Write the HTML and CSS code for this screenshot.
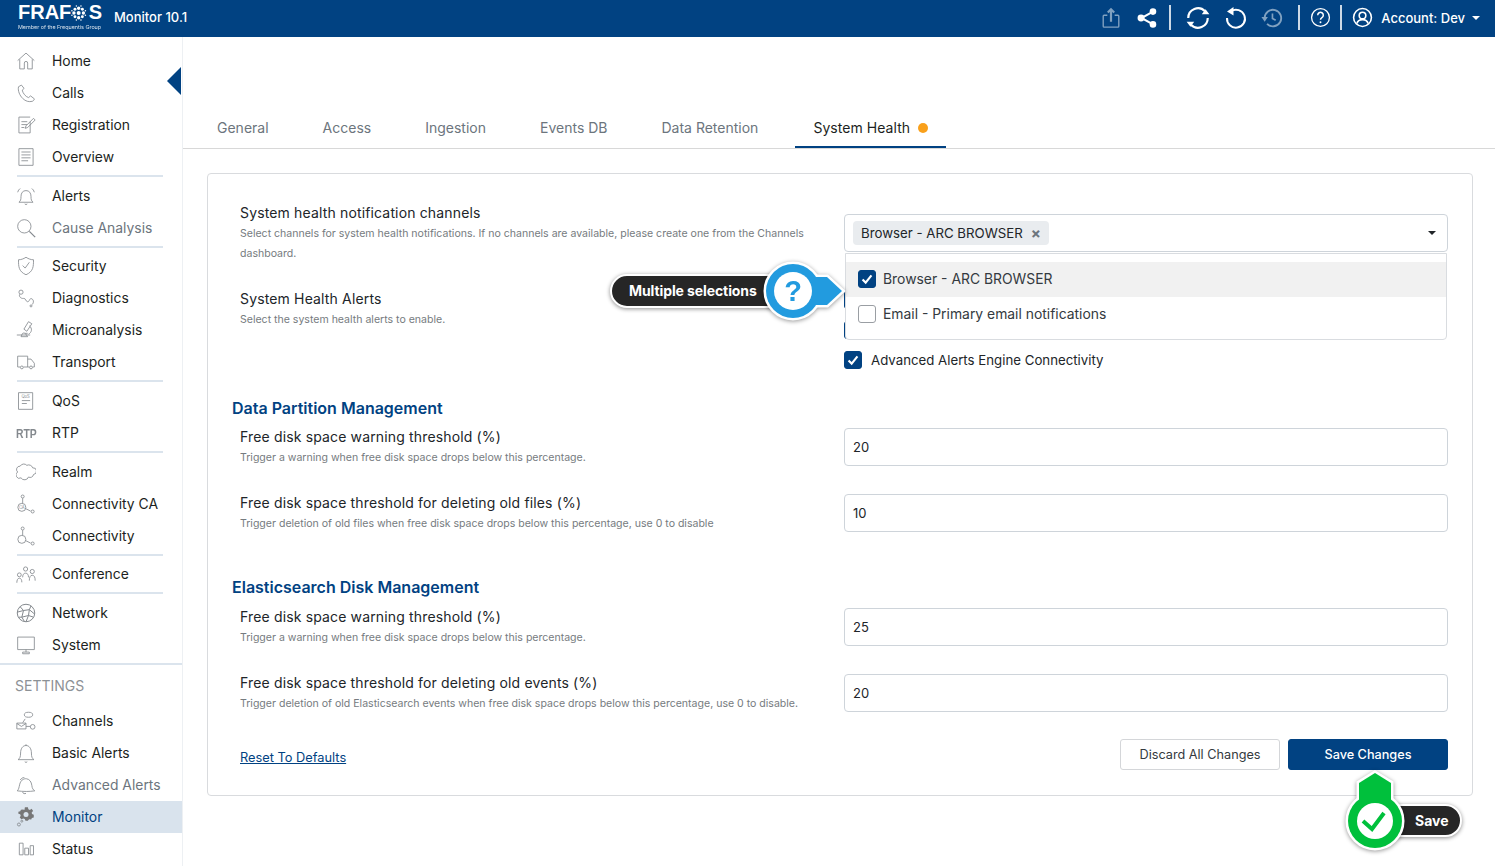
FILE: index.html
```html
<!DOCTYPE html>
<html lang="en">
<head>
    <meta charset="UTF-8">
    <title>Monitor 10.1</title>
    <link rel="stylesheet" href="styles.css">
</head>
<body>
    <header class="topbar">
        <div class="logo">
            <div class="logo-word">FRAF<svg class="logo-o" viewBox="0 0 20 20"><g fill="#fff"><circle cx="10" cy="10" r="2.600"/><circle cx="10" cy="3.800" r="2.200"/><circle cx="10" cy="16.200" r="2.200"/><circle cx="3.800" cy="10" r="2.200"/><circle cx="16.200" cy="10" r="2.200"/><circle cx="5.200" cy="5.200" r="1.900"/><circle cx="14.800" cy="5.200" r="1.900"/><circle cx="5.200" cy="14.800" r="1.900"/><circle cx="14.800" cy="14.800" r="1.900"/><circle cx="1.200" cy="7" r="1"/><circle cx="18.800" cy="7" r="1"/><circle cx="1.200" cy="13" r="1"/><circle cx="18.800" cy="13" r="1"/><circle cx="7" cy="1" r="1"/><circle cx="13" cy="1" r="1"/><circle cx="7" cy="19" r="1"/><circle cx="13" cy="19" r="1"/></g></svg>S</div>
            <div class="logo-sub">Member of the Frequentis Group</div>
        </div>
        <div class="app-name">Monitor 10.1</div>
        <div class="top-actions">
            <svg class="top-icon dim" viewBox="0 0 24 24"><path d="M8 9H4.500a1 1 0 0 0-1 1v11a1 1 0 0 0 1 1h15a1 1 0 0 0 1-1V10a1 1 0 0 0-1-1H16"/><path d="M12 16V2.500M8.500 6 12 2.500 15.500 6" stroke-width="2.400"/></svg>
            <svg class="top-icon ic-share" viewBox="0 0 24 24"><path d="M18.500 5 6 12l12.500 7" stroke-width="2.200"/><circle class="solid" cx="18.500" cy="5" r="3.600"/><circle class="solid" cx="5.500" cy="12" r="3.800"/><circle class="solid" cx="18.500" cy="19" r="3.600"/></svg>
            <span class="top-sep"></span>
            <svg class="top-icon ic-sync" viewBox="0 0 24 24"><path d="M3 12a9 9 0 0 1 15.500-6.200M21 12a9 9 0 0 1-15.500 6.200" stroke-width="2"/><path class="solid" d="M15.500 8.500h7l-3.500-4.500zM8.500 15.500h-7l3.500 4.500z"/></svg>
            <svg class="top-icon ic-undo" viewBox="0 0 24 24"><path d="M7 5.200A9 9 0 1 1 3 12" stroke-width="2"/><path class="solid" d="M9.500 1v8.500L3 5.500z"/></svg>
            <svg class="top-icon ic-history dim" viewBox="0 0 24 24"><path d="M4 12a9 9 0 1 1 2.600 6.400" stroke-width="2"/><path class="solid" d="M.5 11h7L4 16z"/><path d="M12.500 7v5.500l3.500 2" stroke-width="1.800"/></svg>
            <span class="top-sep"></span>
            <svg class="top-icon ic-help" viewBox="0 0 24 24"><circle cx="12" cy="12" r="10.200" stroke-width="1.500"/><path d="M8.800 9.300a3.200 3.200 0 1 1 4.800 2.800c-1 .6-1.600 1.200-1.600 2.400" stroke-width="1.700"/><circle class="solid" cx="12" cy="17.500" r="1.100"/></svg>
            <span class="top-sep last"></span>
            <svg class="top-icon ic-account" viewBox="0 0 24 24"><circle cx="12" cy="12" r="10.200" stroke-width="1.800"/><circle cx="12" cy="9.800" r="3.800" stroke-width="1.800"/><path d="M5.500 19c1-3.500 3.500-4.600 6.500-4.600s5.500 1.100 6.500 4.600" stroke-width="1.800"/></svg>
            <span class="account-name">Account: Dev</span>
            <span class="caret"></span>
        </div>
    </header>

    <div class="layout">
        <nav class="sidebar">
            <span class="collapse"></span>
            <div class="nav-item"><svg viewBox="0 0 24 24"><path d="M2 11.500 12 2.500l10 9M4.500 10v11.500h5.500V14.500a2 2 0 0 1 4 0v7h5.500V10"/></svg>Home</div>
            <div class="nav-item"><svg viewBox="0 0 24 24"><path d="M6.500 2.500 3 4.500c-1 5 1.500 10.500 5 14s7.500 4.500 11.500 3.500c1.500-.5 2.500-2 2.500-3l-4.500-3.500-2.500 2c-3.500-1-7-5.500-7.500-9l2.200-2z"/></svg>Calls</div>
            <div class="nav-item"><svg viewBox="0 0 24 24"><path d="M17 8v13.500H3.500v-19H17M6.500 8h7M6.500 11.500h7M6.500 15h3.500M11 16l1 -3 9-9 2 2-9 9z"/></svg>Registration</div>
            <div class="nav-item"><svg viewBox="0 0 24 24"><path d="M3.500 2h17v20h-17zM6.500 6h11M6.500 9.500h11M6.500 13h11M6.500 16.500h8"/></svg>Overview</div>
            <div class="nav-sep"></div>
            <div class="nav-item"><svg viewBox="0 0 24 24"><path d="M3.500 19.500c2-1.500 2.500-3 2.500-7s2-7 6-7 6 3 6 7 .5 5.500 2.500 7zM10.500 21.500a2 2 0 0 0 3 0M2 7.500c.5-2 1.500-3.500 3-4.500M22 7.500c-.5-2-1.500-3.500-3-4.500"/></svg>Alerts</div>
            <div class="nav-item muted"><svg viewBox="0 0 24 24"><circle cx="10" cy="10" r="8"/><path d="m16 16 7 7" stroke-width="1.500"/></svg>Cause Analysis</div>
            <div class="nav-sep"></div>
            <div class="nav-item"><svg viewBox="0 0 24 24"><path d="M12 1.500c3 2 6 3 9 3 0 8 0 14-9 18-9-4-9-10-9-18 3 0 6-1 9-3zM8 11.500l3 3 5-7"/></svg>Security</div>
            <div class="nav-item"><svg viewBox="0 0 24 24"><circle cx="6" cy="5" r="2.500"/><path d="M4.500 7.500C3 10 6 13 9 12.500c3-.5 2.500 4 5 4s2-5 5-3.500 2 6 0 7"/><circle cx="18" cy="21.500" r="1.200"/></svg>Diagnostics</div>
            <div class="nav-item"><svg viewBox="0 0 24 24"><path d="M1 18h16M15 2l4 2.500-6 9-3.500-2.500zM16 7c4 3 3 8-1 10M11 16h3M7 18c0-2 2-3 4-2l3 4H6z"/></svg>Microanalysis</div>
            <div class="nav-item"><svg viewBox="0 0 24 24"><path d="M5 18H2V5h12v13H9M14 8.500h4l4 5v4.500h-2M14 18h2"/><circle cx="7" cy="18.500" r="1.700"/><circle cx="18" cy="18.500" r="1.700"/></svg>Transport</div>
            <div class="nav-sep"></div>
            <div class="nav-item"><svg viewBox="0 0 24 24"><path d="M3 2h17v20H3zM7 11.500h10M7 15h6"/><text class="tiny" x="11.500" y="8.500" text-anchor="middle">QoS</text></svg>QoS</div>
            <div class="nav-item"><span class="rtp-icon">RTP</span>RTP</div>
            <div class="nav-sep"></div>
            <div class="nav-item"><svg viewBox="0 0 24 24"><path d="M6 19a4 4 0 0 1-4-7 4 4 0 0 1 3-7 5 5 0 0 1 8-1 5 5 0 0 1 7 3 4 4 0 0 1 1 8 4 4 0 0 1-6 3 5 5 0 0 1-9 1z"/></svg>Realm</div>
            <div class="nav-item"><svg viewBox="0 0 24 24"><circle cx="8" cy="3" r="1.800"/><path d="M8 5v6M11.500 17.500l6 3"/><circle cx="7" cy="16" r="4.800"/><circle cx="20" cy="21" r="1.800"/><text class="tiny" x="7" y="18" text-anchor="middle">CA</text></svg>Connectivity CA</div>
            <div class="nav-item"><svg viewBox="0 0 24 24"><circle cx="8" cy="3" r="1.800"/><path d="M8 5v6M11.500 17.500l6 3"/><circle cx="7" cy="16" r="4.800"/><circle cx="20" cy="21" r="1.800"/></svg>Connectivity</div>
            <div class="nav-sep"></div>
            <div class="nav-item"><svg viewBox="0 0 24 24"><circle cx="11.500" cy="6" r="2.500"/><path d="M8 16c0-3 1-5 3.500-5s3.500 2 3.500 5"/><circle cx="4" cy="13" r="2.300"/><path d="M1 22.500c0-3 1-5.500 3-5.500s3 2 3 5"/><circle cx="19.500" cy="9" r="2.500"/><path d="M16 20c0-4 1-6.500 3.500-6.500S23 16 23 20"/></svg>Conference</div>
            <div class="nav-sep"></div>
            <div class="nav-item"><svg viewBox="0 0 24 24"><circle cx="12" cy="12" r="10.500" stroke-width="1.200"/><path d="M5 4.500 9 9l-7.500 2M9 9l7-1 2-4.500M16 8l6 5M16 8l-1 7 6 2M9 9l-2 8-4 0M7 17l8-2-3 7.500M7 17l3 5" stroke-width="1.200"/></svg>Network</div>
            <div class="nav-item"><svg viewBox="0 0 24 24"><path d="M2 2.500h20v15H2zM12 17.500v3M8 20.500h8v2H8z"/></svg>System</div>
            <div class="nav-sep wide"></div>
            <div class="nav-title">SETTINGS</div>
            <div class="nav-item"><svg viewBox="0 0 24 24"><path d="M1 14.500h11v7H1zM1 15l5.500 3.500L12 15M8 14l3-4.500"/><ellipse cx="15" cy="4.500" rx="5" ry="3"/><path d="M12 18.500h5"/><circle cx="20" cy="19" r="2.800"/></svg>Channels</div>
            <div class="nav-item"><svg viewBox="0 0 24 24"><path d="M2.500 20c2-1.500 3-3 3-8s2.500-9 6.500-9 6.500 4 6.500 9 1 6.500 3 8zM10.500 22.500a2 2 0 0 0 3 0M12 3V1.500"/></svg>Basic Alerts</div>
            <div class="nav-item muted"><svg viewBox="0 0 24 24"><path d="M1.500 19c2-2 2-4 3-8s4-7 8-6.500 6 4 6.500 8 1.500 5 3.500 6.500c-6 1-14 1-21 0zM8 20.500a2.500 2 0 0 0 4 1.500M5 6c1.500-2 3-3 5-3"/></svg>Advanced Alerts</div>
            <div class="nav-item active"><svg viewBox="0 0 24 24"><path class="gear" d="M13 1.500h4l.6 2.600 2 .9 2.300-1.400 2.100 2.800-1.900 1.800.3 2.300 2.400 1v3.500l-2.500.7-.9 2-.5.200-2.300-.5-1.800 2-3 .2-1-2.400-2-.8-2.400 1.200-2.300-2.500 1.300-2.200-.7-2.100-2.400-.8V7.600l2.500-.7.900-2 2.800-.4 1.800.5z" transform="translate(-1 -1) scale(.9)"/><circle class="gear-hole" cx="12" cy="9" r="3"/><circle cx="3.500" cy="21" r="1.800"/><circle cx="7" cy="17" r="1.200"/></svg>Monitor</div>
            <div class="nav-item"><svg viewBox="0 0 24 24"><path d="M4 5h4.500v14H4zM10.500 11H15v8h-4.500zM17 8h4v11h-4z"/></svg>Status</div>
        </nav>

        <main class="content">
            <div class="tabs">
                <div class="tab">General</div>
                <div class="tab">Access</div>
                <div class="tab">Ingestion</div>
                <div class="tab">Events DB</div>
                <div class="tab">Data Retention</div>
                <div class="tab current">System Health <span class="dot"></span></div>
            </div>

            <section class="card">
                <div class="form-row first">
                    <div>
                        <div class="label">System health notification channels</div>
                        <div class="help">Select channels for system health notifications. If no channels are available, please create one from the Channels dashboard.</div>
                    </div>
                    <div class="select">
                        <span class="chip">Browser - ARC BROWSER <span class="chip-x">×</span></span>
                        <span class="select-caret"></span>
                    </div>
                </div>
                <div class="form-row alerts">
                    <div>
                        <div class="label">System Health Alerts</div>
                        <div class="help">Select the system health alerts to enable.</div>
                    </div>
                    <div class="check-list">
                        <div class="check-row"><span class="box on"></span></div>
                        <div class="check-row"><span class="box on"></span></div>
                        <div class="check-row"><span class="box on"><svg viewBox="0 0 18 18"><path d="m4 9.500 3.500 3.500 6.500-8"/></svg></span>Advanced Alerts Engine Connectivity</div>
                    </div>
                </div>

                <h3 class="section-title">Data Partition Management</h3>
                <div class="form-row">
                    <div>
                        <div class="label">Free disk space warning threshold (%)</div>
                        <div class="help">Trigger a warning when free disk space drops below this percentage.</div>
                    </div>
                    <div class="input">20</div>
                </div>
                <div class="form-row spaced">
                    <div>
                        <div class="label">Free disk space threshold for deleting old files (%)</div>
                        <div class="help">Trigger deletion of old files when free disk space drops below this percentage, use 0 to disable</div>
                    </div>
                    <div class="input">10</div>
                </div>

                <h3 class="section-title second">Elasticsearch Disk Management</h3>
                <div class="form-row">
                    <div>
                        <div class="label">Free disk space warning threshold (%)</div>
                        <div class="help">Trigger a warning when free disk space drops below this percentage.</div>
                    </div>
                    <div class="input">25</div>
                </div>
                <div class="form-row spaced">
                    <div>
                        <div class="label">Free disk space threshold for deleting old events (%)</div>
                        <div class="help">Trigger deletion of old Elasticsearch events when free disk space drops below this percentage, use 0 to disable.</div>
                    </div>
                    <div class="input">20</div>
                </div>

                <div class="card-footer">
                    <a class="reset" href="#">Reset To Defaults</a>
                    <div class="buttons">
                        <button class="btn">Discard All Changes</button>
                        <button class="btn primary">Save Changes</button>
                    </div>
                </div>
            </section>
        </main>
    </div>

    <!-- dropdown open over the alerts list -->
    <div class="dropdown">
        <div class="option hover"><span class="box on"><svg viewBox="0 0 18 18"><path d="m4 9.500 3.500 3.500 6.500-8"/></svg></span>Browser - ARC BROWSER</div>
        <div class="option"><span class="box"></span>Email - Primary email notifications</div>
    </div>

    <!-- annotations on top of the screenshot -->
    <div class="callout multi">
        <span class="pill">Multiple selections</span>
        <svg class="badge" viewBox="0 0 84 62">
            <g class="halo"><circle cx="31" cy="31" r="27"/><path d="M45 17h20l15 14-15 14H45z"/></g>
            <g class="blue"><circle cx="31" cy="31" r="27"/><path d="M45 17h20l15 14-15 14H45z"/></g>
            <circle cx="31" cy="31" r="19" fill="#fff"/>
            <text x="31" y="41" text-anchor="middle" class="qmark">?</text>
        </svg>
    </div>
    <div class="callout save">
        <span class="pill">Save</span>
        <svg class="badge" viewBox="0 0 60 82">
            <g class="halo"><circle cx="30" cy="51" r="27"/><path d="M30 3 46 13v28H14V13z"/></g>
            <g class="green"><circle cx="30" cy="51" r="27"/><path d="M30 3 46 13v28H14V13z"/></g>
            <circle cx="30" cy="51" r="18" fill="#fff"/>
            <path class="tick" d="m18 51 9 8 12-16"/>
        </svg>
    </div>
</body>
</html>
```

FILE: styles.css
```css
* {
    box-sizing: border-box;
}

html, body {
    margin: 0;
    height: 866px;
    overflow: hidden;
}

body {
    position: relative;
    font-family: Inter, "Liberation Sans", sans-serif;
    font-size: 14px;
    color: #212529;
    background: #fff;
}

/* top bar */
.topbar {
    display: flex;
    align-items: center;
    height: 37px;
    padding-left: 18px;
    background: #014282;
    color: #fff;
}

.logo {
    width: 84px;
    margin: 0 12px 3px 0;
}

.logo-word {
    display: flex;
    align-items: center;
    height: 19px;
    font-family: "Liberation Sans", sans-serif;
    font-size: 20px;
    font-weight: 700;
    line-height: 19px;
}

.logo-o {
    width: 16px;
    height: 16px;
    margin: 0 2px 0 0;
}

.logo-sub {
    margin-top: 2px;
    font-size: 5.400px;
    line-height: 7px;
    white-space: nowrap;
    opacity: .85;
}

.app-name {
    padding-bottom: 3px;
    font-size: 13px;
    font-weight: 500;
}

.top-actions {
    display: flex;
    align-items: center;
    margin-left: auto;
    padding: 0 15px 2px 0;
}

.top-icon {
    width: 22px;
    height: 22px;
    fill: none;
    stroke: #fff;
    stroke-width: 1.500;
}

.top-icon .solid {
    fill: #fff;
    stroke: none;
}

.top-icon.dim {
    opacity: .5;
}

.ic-share {
    margin-left: 14px;
}

.ic-undo {
    margin-left: 13px;
    width: 24px;
    height: 24px;
}

.ic-history {
    margin: 0 4px 0 13px;
}

.ic-help, .ic-account {
    width: 21px;
    height: 21px;
}

.top-sep {
    width: 2px;
    height: 25px;
    margin-left: 11px;
    background: rgba(255, 255, 255, .8);
}

.top-sep.last {
    margin-left: 9px;
}

.top-sep + .top-icon {
    margin-left: 10px;
}

.top-sep + .ic-sync {
    width: 26px;
    height: 26px;
    margin-left: 14px;
}

.account-name {
    margin-left: 8px;
    font-size: 13px;
    font-weight: 500;
}

.caret {
    width: 0;
    height: 0;
    margin-left: 7px;
    border: 4px solid transparent;
    border-top-color: #fff;
    border-bottom: 0;
}

/* sidebar */
.layout {
    display: flex;
    height: 829px;
}

.sidebar {
    position: relative;
    flex: 0 0 183px;
    padding-top: 8px;
    border-right: 1px solid #edf0f3;
    overflow: hidden;
}

.collapse {
    position: absolute;
    top: 30px;
    right: 1px;
    border-style: solid;
    border-width: 14px 14px 14px 0;
    border-color: transparent #014282 transparent transparent;
}

.nav-item {
    display: flex;
    align-items: center;
    height: 32px;
    padding-left: 16px;
    font-size: 13.900px;
    color: #1c1f22;
}

.nav-item svg {
    flex: 0 0 20px;
    width: 20px;
    height: 20px;
    margin-right: 16px;
    fill: none;
    stroke: #84898e;
    stroke-width: 1;
}

.nav-item .tiny {
    font-size: 5px;
    fill: #84898e;
    stroke: none;
}

.nav-item.muted {
    color: #6c757d;
}

.nav-item.active {
    background: #d9e3ed;
    color: #014282;
}

.nav-item .gear {
    fill: #777;
    stroke: none;
}

.nav-item .gear-hole {
    fill: #d9e3ed;
    stroke: none;
}

.rtp-icon {
    width: 20px;
    margin-right: 16px;
    font-family: "Liberation Sans", sans-serif;
    font-size: 13px;
    font-weight: 700;
    color: #84898e;
    transform: scaleX(.8);
    transform-origin: left;
}

.nav-sep {
    height: 2px;
    margin: 2px 19px 2.700px 17px;
    background: #dbe4ed;
}

.nav-sep.wide {
    margin: 2px 0 0;
}

.nav-title {
    height: 40px;
    padding-left: 15px;
    font-size: 14px;
    line-height: 41px;
    color: #8d9196;
}

/* main column */
.content {
    flex: 1;
    min-width: 0;
}

.tabs {
    display: flex;
    gap: 18px;
    height: 112px;
    padding: 71px 0 0 16px;
    border-bottom: 1px solid #d8d8d8;
}

.tab {
    height: 40px;
    padding: 0 18px;
    font-size: 14px;
    line-height: 40px;
    color: #6c757d;
}

.tab.current {
    margin-left: 1px;
    border-bottom: 2px solid #014282;
    color: #1c1f22;
    letter-spacing: .05px;
}

.dot {
    display: inline-block;
    width: 10px;
    height: 10px;
    margin-left: 4px;
    border-radius: 50%;
    background: #f9a01b;
}

.card {
    position: relative;
    height: 623px;
    margin: 24px 22px 0 24px;
    padding: 29px 24px 0 32px;
    border: 1px solid #d9dbde;
    border-radius: 4px;
}

.form-row {
    display: grid;
    grid-template-columns: 604px 604px;
    height: 40px;
}

.form-row.first {
    height: 60px;
}

.form-row.first .select {
    margin-top: 11px;
}

.form-row.alerts {
    height: 81px;
    margin-top: 26px;
}

.form-row.spaced {
    margin-top: 26px;
}

.label {
    height: 20px;
    font-size: 14px;
    line-height: 20px;
    letter-spacing: .15px;
    color: #212529;
}

.help {
    max-width: 570px;
    padding-top: 1px;
    font-size: 10.560px;
    line-height: 20px;
    color: #767b80;
}

.select, .input {
    display: flex;
    align-items: center;
    height: 38px;
    margin-top: 1px;
    padding: 0 8px;
    border: 1px solid #ced4da;
    border-radius: 4px;
    font-size: 13px;
    color: #212529;
}

.chip {
    display: flex;
    align-items: center;
    height: 24px;
    padding: 0 8px;
    border-radius: 4px;
    background: #e9ecef;
    font-size: 13.250px;
}

.chip-x {
    margin-left: 8px;
    font-size: 15px;
    font-weight: 700;
    color: #6c757d;
}

.select-caret {
    margin-left: auto;
    margin-right: 3px;
    border: 4px solid transparent;
    border-top-color: #212529;
    border-bottom: 0;
}

.check-list {
    padding-top: 2px;
}

.check-row {
    display: flex;
    align-items: center;
    gap: 9px;
    height: 18px;
    margin-bottom: 12px;
    font-size: 13.250px;
}

.box {
    flex: 0 0 18px;
    width: 18px;
    height: 18px;
    border: 1px solid #9a9ea3;
    border-radius: 3px;
    background: #fff;
}

.box.on {
    border-color: #014282;
    background: #014282;
}

.box svg {
    display: block;
    width: 16px;
    height: 16px;
    fill: none;
    stroke: #fff;
    stroke-width: 2.400;
}

.section-title {
    height: 22px;
    margin: 27px 0 8px -8px;
    font-size: 16px;
    font-weight: 600;
    line-height: 22px;
    color: #014282;
}

.section-title.second {
    margin-top: 43px;
    margin-bottom: 9px;
}

.card-footer {
    display: flex;
    justify-content: space-between;
    align-items: center;
    width: 1208px;
    margin-top: 26px;
}

.reset {
    margin-top: 6px;
    font-size: 12.800px;
    color: #014282;
}

.buttons {
    display: flex;
    gap: 8px;
}

.btn {
    width: 160px;
    height: 31px;
    border: 1px solid #d4d6d9;
    border-radius: 3px;
    background: #fff;
    font-family: inherit;
    font-size: 12.700px;
    color: #343a40;
}

.btn.primary {
    border-color: #014282;
    background: #014282;
    color: #fff;
    font-weight: 500;
}

/* open dropdown */
.dropdown {
    position: absolute;
    top: 253px;
    left: 845px;
    width: 602px;
    height: 87px;
    padding-top: 8px;
    border: 1px solid #d9dce0;
    border-radius: 0 0 4px 4px;
    background: #fff;
}

.option {
    display: flex;
    align-items: center;
    gap: 7px;
    height: 34.500px;
    padding-left: 12px;
    font-size: 13.900px;
    color: #343a40;
}

.option.hover {
    background: #f1f1f1;
}

/* annotations */
.callout {
    position: absolute;
}

.callout .pill {
    position: absolute;
    border: 2px solid #fff;
    border-radius: 18px;
    background: #262626;
    box-shadow: 0 1px 4px rgba(0, 0, 0, .45);
    font-weight: 700;
    color: #fff;
    white-space: nowrap;
}

.callout .badge {
    position: absolute;
    filter: drop-shadow(0 1px 2px rgba(0, 0, 0, .4));
}

.halo {
    fill: #fff;
    stroke: #fff;
    stroke-width: 5;
}

.blue {
    fill: #229bdf;
}

.green {
    fill: #00c03c;
}

.qmark {
    font-family: "Liberation Sans", sans-serif;
    font-size: 29px;
    font-weight: 700;
    fill: #229bdf;
}

.tick {
    fill: none;
    stroke: #00c03c;
    stroke-width: 4;
}

.multi {
    top: 260px;
    left: 610px;
}

.multi .pill {
    top: 14px;
    left: 0;
    width: 175px;
    height: 34px;
    padding-left: 17px;
    font-size: 14px;
    line-height: 30px;
    letter-spacing: -.1px;
}

.multi .badge {
    top: 0;
    left: 152px;
    width: 84px;
    height: 62px;
}

.save {
    top: 770px;
    left: 1345px;
}

.save .pill {
    top: 34px;
    left: 40px;
    width: 77px;
    height: 33px;
    padding-left: 28px;
    font-size: 14px;
    line-height: 29px;
}

.save .badge {
    top: 0;
    left: 0;
    width: 60px;
    height: 82px;
}
```
